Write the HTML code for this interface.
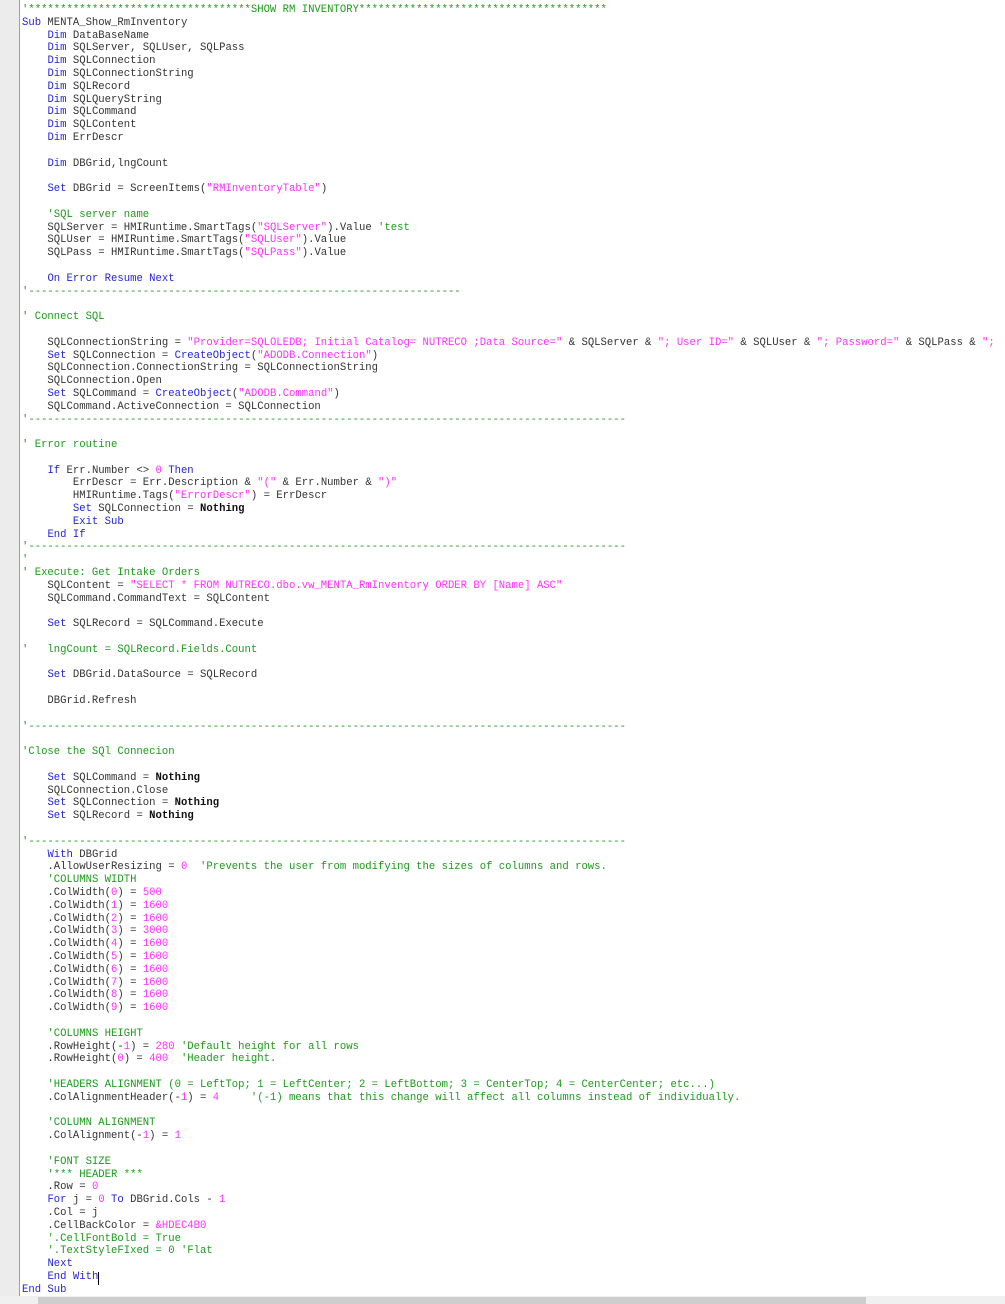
<!DOCTYPE html>
<html><head><meta charset="utf-8"><style>
html,body{margin:0;padding:0;width:1005px;height:1304px;overflow:hidden;background:#fff}
.g{position:absolute;left:0;top:0;width:19px;height:1296px;background:#ececec;border-right:1px solid #a0a0a0}
pre{position:absolute;left:22px;top:4px;margin:0;font-family:"Liberation Mono",monospace;font-size:10.6px;line-height:12.8px;color:#333;white-space:pre}
.k{color:#2424d8}.c{color:#1c9a1c}.s{color:#ff30ff}b{color:#111}
.sb{position:absolute;left:0;top:1296px;width:1005px;height:8px;background:#f0f0f0}
.th{position:absolute;left:38px;top:1297px;width:828px;height:7px;background:#cdcdcd}
.cur{position:absolute;left:98px;top:1272px;width:1px;height:13px;background:#000}
</style></head><body>
<div class="g"></div>
<pre><span class="c">'***********************************SHOW RM INVENTORY***************************************</span>
<span class="k">Sub</span> MENTA_Show_RmInventory
    <span class="k">Dim</span> DataBaseName
    <span class="k">Dim</span> SQLServer, SQLUser, SQLPass
    <span class="k">Dim</span> SQLConnection
    <span class="k">Dim</span> SQLConnectionString
    <span class="k">Dim</span> SQLRecord
    <span class="k">Dim</span> SQLQueryString
    <span class="k">Dim</span> SQLCommand
    <span class="k">Dim</span> SQLContent
    <span class="k">Dim</span> ErrDescr

    <span class="k">Dim</span> DBGrid,lngCount

    <span class="k">Set</span> DBGrid = ScreenItems(<span class="s">"RMInventoryTable"</span>)

    <span class="c">'SQL server name</span>
    SQLServer = HMIRuntime.SmartTags(<span class="s">"SQLServer"</span>).Value <span class="c">'test</span>
    SQLUser = HMIRuntime.SmartTags(<span class="s">"SQLUser"</span>).Value
    SQLPass = HMIRuntime.SmartTags(<span class="s">"SQLPass"</span>).Value

    <span class="k">On Error Resume Next</span>
<span class="c">'--------------------------------------------------------------------</span>

<span class="c">' Connect SQL</span>

    SQLConnectionString = <span class="s">"Provider=SQLOLEDB; Initial Catalog= NUTRECO ;Data Source="</span> &amp; SQLServer &amp; <span class="s">"; User ID="</span> &amp; SQLUser &amp; <span class="s">"; Password="</span> &amp; SQLPass &amp; <span class="s">";</span>
    <span class="k">Set</span> SQLConnection = <span class="k">CreateObject</span>(<span class="s">"ADODB.Connection"</span>)
    SQLConnection.ConnectionString = SQLConnectionString
    SQLConnection.Open
    <span class="k">Set</span> SQLCommand = <span class="k">CreateObject</span>(<span class="s">"ADODB.Command"</span>)
    SQLCommand.ActiveConnection = SQLConnection
<span class="c">'----------------------------------------------------------------------------------------------</span>

<span class="c">' Error routine</span>

    <span class="k">If</span> Err.Number &lt;&gt; <span class="s">0</span> <span class="k">Then</span>
        ErrDescr = Err.Description &amp; <span class="s">"("</span> &amp; Err.Number &amp; <span class="s">")"</span>
        HMIRuntime.Tags(<span class="s">"ErrorDescr"</span>) = ErrDescr
        <span class="k">Set</span> SQLConnection = <b>Nothing</b>
        <span class="k">Exit Sub</span>
    <span class="k">End If</span>
<span class="c">'----------------------------------------------------------------------------------------------</span>
<span class="c">'</span>
<span class="c">' Execute: Get Intake Orders</span>
    SQLContent = <span class="s">"SELECT * FROM NUTRECO.dbo.vw_MENTA_RmInventory ORDER BY [Name] ASC"</span>
    SQLCommand.CommandText = SQLContent

    <span class="k">Set</span> SQLRecord = SQLCommand.Execute

<span class="c">'   lngCount = SQLRecord.Fields.Count</span>

    <span class="k">Set</span> DBGrid.DataSource = SQLRecord

    DBGrid.Refresh

<span class="c">'----------------------------------------------------------------------------------------------</span>

<span class="c">'Close the SQl Connecion</span>

    <span class="k">Set</span> SQLCommand = <b>Nothing</b>
    SQLConnection.Close
    <span class="k">Set</span> SQLConnection = <b>Nothing</b>
    <span class="k">Set</span> SQLRecord = <b>Nothing</b>

<span class="c">'----------------------------------------------------------------------------------------------</span>
    <span class="k">With</span> DBGrid
    .AllowUserResizing = <span class="s">0</span>  <span class="c">'Prevents the user from modifying the sizes of columns and rows.</span>
    <span class="c">'COLUMNS WIDTH</span>
    .ColWidth(<span class="s">0</span>) = <span class="s">500</span>
    .ColWidth(<span class="s">1</span>) = <span class="s">1600</span>
    .ColWidth(<span class="s">2</span>) = <span class="s">1600</span>
    .ColWidth(<span class="s">3</span>) = <span class="s">3000</span>
    .ColWidth(<span class="s">4</span>) = <span class="s">1600</span>
    .ColWidth(<span class="s">5</span>) = <span class="s">1600</span>
    .ColWidth(<span class="s">6</span>) = <span class="s">1600</span>
    .ColWidth(<span class="s">7</span>) = <span class="s">1600</span>
    .ColWidth(<span class="s">8</span>) = <span class="s">1600</span>
    .ColWidth(<span class="s">9</span>) = <span class="s">1600</span>

    <span class="c">'COLUMNS HEIGHT</span>
    .RowHeight(-<span class="s">1</span>) = <span class="s">280</span> <span class="c">'Default height for all rows</span>
    .RowHeight(<span class="s">0</span>) = <span class="s">400</span>  <span class="c">'Header height.</span>

    <span class="c">'HEADERS ALIGNMENT (0 = LeftTop; 1 = LeftCenter; 2 = LeftBottom; 3 = CenterTop; 4 = CenterCenter; etc...)</span>
    .ColAlignmentHeader(-<span class="s">1</span>) = <span class="s">4</span>     <span class="c">'(-1) means that this change will affect all columns instead of individually.</span>

    <span class="c">'COLUMN ALIGNMENT</span>
    .ColAlignment(-<span class="s">1</span>) = <span class="s">1</span>

    <span class="c">'FONT SIZE</span>
    <span class="c">'*** HEADER ***</span>
    .Row = <span class="s">0</span>
    <span class="k">For</span> j = <span class="s">0</span> <span class="k">To</span> DBGrid.Cols - <span class="s">1</span>
    .Col = j
    .CellBackColor = <span class="s">&amp;HDEC4B0</span>
    <span class="c">'.CellFontBold = True</span>
    <span class="c">'.TextStyleFIxed = 0 'Flat</span>
    <span class="k">Next</span>
    <span class="k">End With</span>
<span class="k">End Sub</span></pre>
<div class="cur"></div>
<div class="sb"></div><div class="th"></div>
</body></html>
